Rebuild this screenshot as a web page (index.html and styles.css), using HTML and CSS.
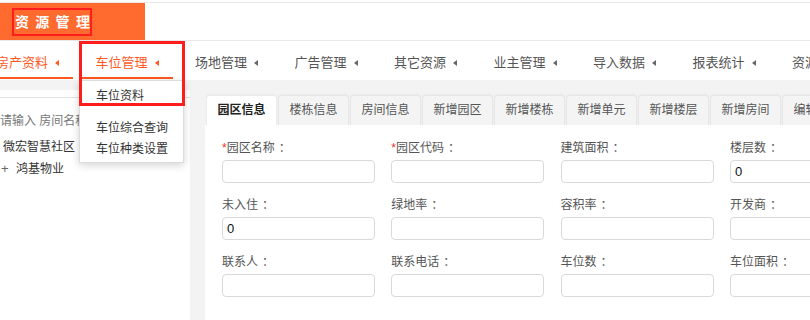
FILE: index.html
```html
<!DOCTYPE html>
<html lang="zh-CN">
<head>
<meta charset="utf-8">
<title>资源管理</title>
<link rel="stylesheet" href="styles.css">
</head>
<body>
<div class="page">
  <header class="topbar">
    <div class="logo"><span class="logo-box"><span class="logo-text">资源管理</span></span></div>
  </header>
  <nav class="nav">
    <div class="nav-item active">房产资料<i class="tri"></i></div>
    <div class="nav-item active">车位管理<i class="tri"></i>
      <div class="dropdown">
        <div class="dd-item">车位资料</div>
        <div class="dd-sep"></div>
        <div class="dd-item">车位综合查询</div>
        <div class="dd-item">车位种类设置</div>
      </div>
      <div class="mark-box"></div>
    </div>
    <div class="nav-item">场地管理<i class="tri"></i></div>
    <div class="nav-item">广告管理<i class="tri"></i></div>
    <div class="nav-item">其它资源<i class="tri"></i></div>
    <div class="nav-item">业主管理<i class="tri"></i></div>
    <div class="nav-item">导入数据<i class="tri"></i></div>
    <div class="nav-item">报表统计<i class="tri"></i></div>
    <div class="nav-item">资源管理<i class="tri"></i></div>
  </nav>
  <div class="main">
    <aside class="side">
      <div class="search">请输入 房间名称</div>
      <div class="tree-item">微宏智慧社区</div>
      <div class="tree-item"><span class="plus">+</span>鸿基物业</div>
    </aside>
    <section class="content">
      <div class="tabs">
        <div class="tab active">园区信息</div>
        <div class="tab">楼栋信息</div>
        <div class="tab">房间信息</div>
        <div class="tab">新增园区</div>
        <div class="tab">新增楼栋</div>
        <div class="tab">新增单元</div>
        <div class="tab">新增楼层</div>
        <div class="tab">新增房间</div>
        <div class="tab">编辑园区</div>
      </div>
      <div class="panel">
        <form class="form-grid">
          <div class="field"><label class="field-label"><span class="req">*</span>园区名称<span class="colon">：</span></label><input class="field-input" type="text" value=""></div>
          <div class="field"><label class="field-label"><span class="req">*</span>园区代码<span class="colon">：</span></label><input class="field-input" type="text" value=""></div>
          <div class="field"><label class="field-label">建筑面积<span class="colon">：</span></label><input class="field-input" type="text" value=""></div>
          <div class="field"><label class="field-label">楼层数<span class="colon">：</span></label><input class="field-input" type="text" value="0"></div>
          <div class="field"><label class="field-label">未入住<span class="colon">：</span></label><input class="field-input" type="text" value="0"></div>
          <div class="field"><label class="field-label">绿地率<span class="colon">：</span></label><input class="field-input" type="text" value=""></div>
          <div class="field"><label class="field-label">容积率<span class="colon">：</span></label><input class="field-input" type="text" value=""></div>
          <div class="field"><label class="field-label">开发商<span class="colon">：</span></label><input class="field-input" type="text" value=""></div>
          <div class="field"><label class="field-label">联系人<span class="colon">：</span></label><input class="field-input" type="text" value=""></div>
          <div class="field"><label class="field-label">联系电话<span class="colon">：</span></label><input class="field-input" type="text" value=""></div>
          <div class="field"><label class="field-label">车位数<span class="colon">：</span></label><input class="field-input" type="text" value=""></div>
          <div class="field"><label class="field-label">车位面积<span class="colon">：</span></label><input class="field-input" type="text" value=""></div>
        </form>
      </div>
    </section>
  </div>
</div>
</body>
</html>
```
FILE: styles.css
```css
* { box-sizing: border-box; }
html, body {
  margin: 0;
  padding: 0;
  width: 810px;
  height: 320px;
  overflow: hidden;
  background: #fff;
}
body {
  font-family: "Liberation Sans", "Noto Sans CJK SC", sans-serif;
  font-size: 12px;
  color: #555;
}
.page { width: 810px; height: 320px; overflow: hidden; }

/* top bar */
.topbar {
  margin-top: 2px;
  height: 39px;
  border-top: 1px solid #e8e8e8;
  border-bottom: 1px solid #e8e8e8;
  display: flex;
}
.logo {
  width: 145px;
  background: #ff6a2e;
  display: flex;
  align-items: center;
  padding-left: 12px;
}
.logo-box {
  display: inline-block;
  border: 2px solid #ff1c1c;
  padding: 3px 0 3px 1px;
  line-height: 18px;
  height: 28px;
}
.logo-text {
  display: inline-block;
  color: #fff;
  font-weight: bold;
  font-size: 14px;
  letter-spacing: 6.3px;
  margin-right: -6px;
}

/* nav */
.nav {
  height: 39px;
  display: flex;
  gap: 8.5px;
  margin-left: -18px;
  position: relative;
  z-index: 5;
  background: #fff;
  white-space: nowrap;
}
.nav-item {
  position: relative;
  flex-shrink: 0;
  width: 91px;
  height: 38px;
  padding: 12px 0 0 14px;
  line-height: 20px;
  font-size: 13px;
  color: #555;
  border-bottom: 2px solid transparent;
}
.nav-item.active {
  color: #ff5a1f;
  border-bottom-color: #ff5a1f;
}
.tri {
  display: inline-block;
  width: 0;
  height: 0;
  border-top: 3px solid transparent;
  border-bottom: 3px solid transparent;
  border-right: 4px solid #666;
  margin-left: 7px;
  vertical-align: middle;
  position: relative;
  top: -1px;
}
.nav-item.active .tri { border-right-color: #ff5a1f; }

.dropdown {
  position: absolute;
  left: -2.5px;
  top: 39px;
  width: 105px;
  height: 83px;
  background: #fff;
  border: 1px solid #dcdcdc;
  box-shadow: 0 2px 8px rgba(0, 0, 0, 0.18);
  padding: 5px 0 0 16px;
  z-index: 6;
}
.dd-item {
  height: 21px;
  line-height: 21px;
  font-size: 12px;
  color: #333;
}
.dd-sep { height: 11px; }
.mark-box {
  position: absolute;
  left: -2.5px;
  top: 0;
  width: 106px;
  height: 65px;
  border: 3px solid #ff1c1c;
  z-index: 7;
}

/* main */
.main {
  display: flex;
  background: #f3f3f3;
  padding-top: 10px;
  height: 240px;
}
.side {
  width: 190px;
  flex-shrink: 0;
  background: #fff;
  padding-top: 7px;
}
.search {
  border-top: 1px solid #e2e2e2;
  padding: 13px 0 6px 0;
  line-height: 20px;
  height: 40px;
  color: #777;
  font-size: 12px;
}
.tree-item {
  height: 21px;
  line-height: 21px;
  padding-left: 3px;
  color: #333;
  font-size: 12px;
}
.plus {
  display: inline-block;
  width: 15px;
  margin-left: -2px;
  color: #666;
  font-size: 13px;
}

.content {
  margin-left: 15px;
  padding-top: 5px;
  flex: 1;
  overflow: hidden;
}
.tabs {
  display: flex;
  padding-left: 1px;
  height: 30px;
  white-space: nowrap;
}
.tab {
  flex-shrink: 0;
  width: 71px;
  margin-right: 1px;
  height: 30px;
  line-height: 29px;
  text-align: center;
  font-size: 12px;
  color: #555;
  background: #f4f4f4;
  border: 1px solid #e6e6e6;
  border-bottom: none;
  border-radius: 4px 4px 0 0;
  box-shadow: 0 -1px 2px rgba(0, 0, 0, 0.04);
}
.tab.active {
  background: #fff;
  color: #222;
  font-weight: bold;
  border-color: #ececec;
}
.panel {
  background: #fff;
  height: 200px;
  padding: 15px 0 0 17px;
  overflow: hidden;
}
.form-grid {
  display: grid;
  grid-template-columns: repeat(4, 153px);
  column-gap: 16.3px;
  row-gap: 14px;
  margin: 0;
}
.field { display: flex; flex-direction: column; }
.field-label {
  line-height: 16px;
  height: 16px;
  margin-bottom: 4px;
  font-size: 12px;
  color: #555;
  white-space: nowrap;
}
.colon { margin-left: 4px; }
.req { color: #e8322a; }
.field-input {
  width: 153px;
  height: 23px;
  margin: 0;
  border: 1px solid #d9d9d9;
  border-radius: 4px;
  background: #fff;
  padding: 0 4px;
  font-family: "Liberation Sans", "Noto Sans CJK SC", sans-serif;
  font-size: 13px;
  color: #111;
  outline: none;
}
```
